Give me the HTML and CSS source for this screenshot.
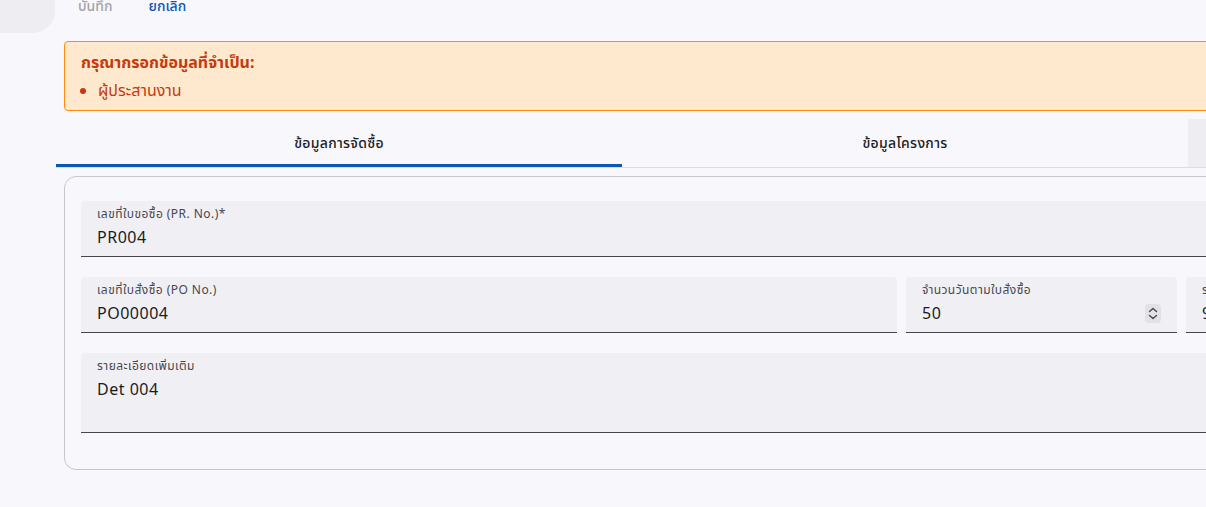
FILE: index.html
```html
<!DOCTYPE html>
<html lang="th">
<head>
<meta charset="utf-8">
<title>PO</title>
<link rel="stylesheet" href="styles.css">
</head>
<body>
<div class="page">
  <div class="topbar">
    <div class="blob"></div>
    <div class="actions">
      <button class="btn btn-disabled" type="button">บันทึก</button>
      <button class="btn btn-primary" type="button">ยกเลิก</button>
    </div>
  </div>

  <div class="main">
    <div class="alert">
      <div class="alert-title">กรุณากรอกข้อมูลที่จำเป็น:</div>
      <ul class="alert-list">
        <li>ผู้ประสานงาน</li>
      </ul>
    </div>

    <div class="tabs">
      <div class="tab tab-active">ข้อมูลการจัดซื้อ<span class="indicator"></span></div>
      <div class="tab">ข้อมูลโครงการ</div>
      <div class="tab tab-hover">ข้อมูลผู้ประสานงาน</div>
    </div>

    <div class="card">
      <div class="field">
        <div class="label">เลขที่ใบขอซื้อ (PR. No.)*</div>
        <div class="value">PR004</div>
      </div>

      <div class="row">
        <div class="field">
          <div class="label">เลขที่ใบสั่งซื้อ (PO No.)</div>
          <div class="value">PO00004</div>
        </div>
        <div class="field">
          <div class="label">จำนวนวันตามใบสั่งซื้อ</div>
          <div class="value value-num">
            <span>50</span>
            <span class="spinner">
              <svg width="16" height="19" viewBox="0 0 16 19" aria-hidden="true">
                <path d="M4.5 7.5 L8 4.5 L11.5 7.5" fill="none" stroke="#45474f" stroke-width="1.4" stroke-linecap="round" stroke-linejoin="round"/>
                <path d="M4.5 11.5 L8 14.5 L11.5 11.5" fill="none" stroke="#45474f" stroke-width="1.4" stroke-linecap="round" stroke-linejoin="round"/>
              </svg>
            </span>
          </div>
        </div>
        <div class="field">
          <div class="label">ระยะเวลารับประกัน (วัน)</div>
          <div class="value">90</div>
        </div>
      </div>

      <div class="field field-area">
        <div class="label">รายละเอียดเพิ่มเติม</div>
        <div class="value">Det 004</div>
      </div>
    </div>
  </div>
</div>
</body>
</html>
```

FILE: styles.css
```css
html, body {
  margin: 0;
  padding: 0;
  overflow: hidden;
  background: #f8f8fc;
}

body {
  font-family: "Noto Sans", "Noto Sans Thai", "Liberation Sans", sans-serif;
  color: #1b1b1f;
}

.page {
  width: 1800px;
}

.topbar {
  display: flex;
  align-items: flex-start;
  height: 33px;
}

.blob {
  width: 55px;
  height: 33px;
  background: #eeeef2;
  border-radius: 0 0 22px 0;
}

.actions {
  display: flex;
  gap: 12px;
  margin-left: 11px;
  margin-top: -4px;
}

.btn {
  font-family: inherit;
  font-size: 14px;
  line-height: 20px;
  font-weight: 500;
  background: none;
  border: 0;
  padding: 0 12px;
  cursor: pointer;
}

.btn-disabled {
  color: #a3a3a8;
}

.btn-primary {
  color: #0b57b5;
}

.main {
  padding-left: 64px;
  width: 1700px;
}

.alert {
  margin-top: 8px;
  border: 1px solid #ff8a10;
  background: #ffe9ce;
  border-radius: 4px;
  padding: 8px 16px;
  color: #c53a0c;
}

.alert-title {
  font-size: 16px;
  line-height: 24px;
  font-weight: 700;
}

.alert-list {
  margin: 4px 0 0;
  padding-left: 17px;
  font-size: 16px;
  line-height: 24px;
  font-weight: 400;
}

.tabs {
  display: flex;
  margin: 8px 0 0 -8px;
  border-bottom: 1px solid #dcdce4;
}

.tab {
  position: relative;
  flex: 0 0 566px;
  height: 48px;
  display: flex;
  align-items: center;
  justify-content: center;
  font-size: 14px;
  font-weight: 500;
  letter-spacing: 0.3px;
  color: #1b1b1f;
}

.tab-hover {
  background: #eeeef2;
}

.indicator {
  position: absolute;
  left: 0;
  right: 0;
  bottom: 0;
  height: 3px;
  background: #0b57b5;
}

.card {
  margin-top: 8px;
  border: 1px solid #c6c6ce;
  border-radius: 12px;
  padding: 24px 16px 36px;
  display: flex;
  flex-direction: column;
  gap: 20px;
}

.row {
  display: grid;
  grid-template-columns: 816px 271px 1fr;
  gap: 9px;
}

.field {
  box-sizing: border-box;
  height: 56px;
  background: #f0f0f4;
  border-bottom: 1px solid #44474e;
  border-radius: 4px 4px 0 0;
  padding: 5px 16px 0;
}

.field-area {
  height: 80px;
}

.label {
  font-size: 12px;
  line-height: 16px;
  letter-spacing: 0.45px;
  color: #46474f;
  margin-bottom: 3px;
}

.value {
  font-size: 16px;
  line-height: 24px;
  letter-spacing: 0.5px;
  color: #1b1b1f;
}

.value-num {
  display: flex;
  align-items: center;
  justify-content: space-between;
}

.spinner {
  display: flex;
  width: 16px;
  height: 19px;
  background: #e1e1e6;
  border-radius: 4px;
}
```
